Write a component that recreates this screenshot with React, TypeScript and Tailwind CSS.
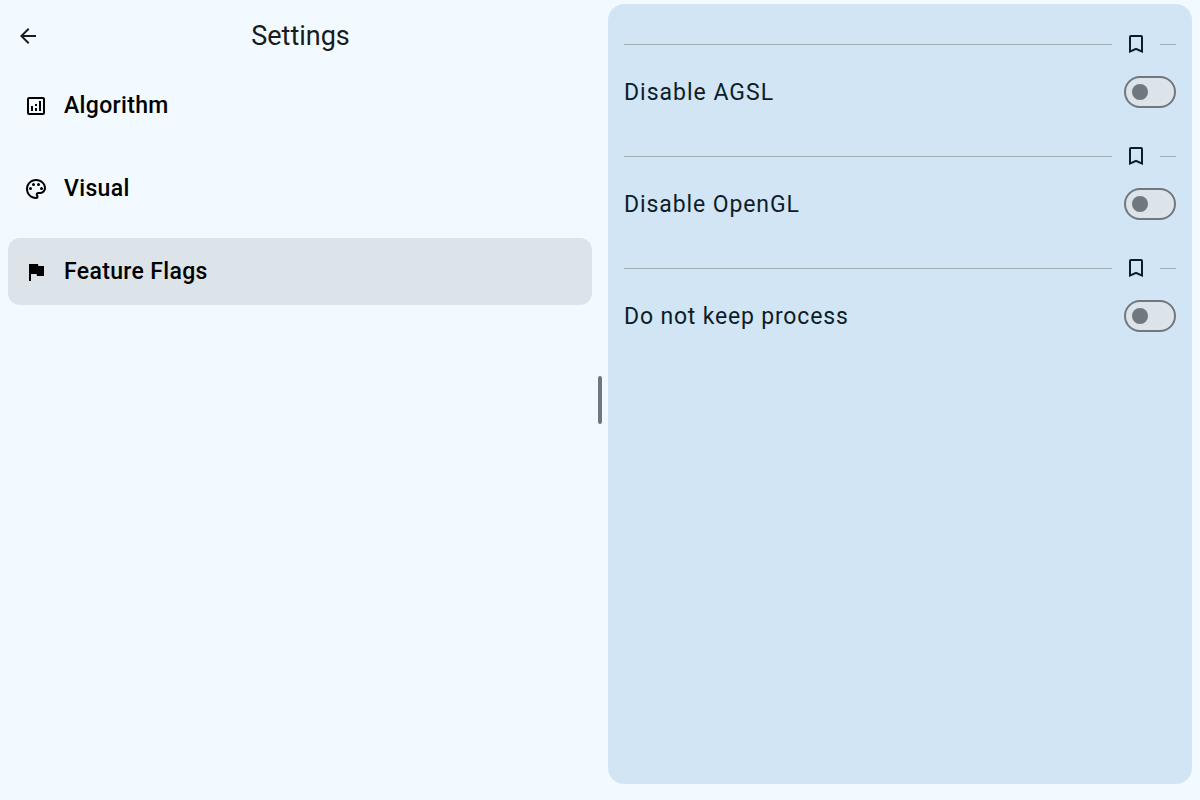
const paths = {
  back: "M20 11H7.83l5.59-5.59L12 4l-8 8 8 8 1.41-1.41L7.83 13H20v-2z",
  chart: "M19 3H5c-1.1 0-2 .9-2 2v14c0 1.1.9 2 2 2h14c1.1 0 2-.9 2-2V5c0-1.1-.9-2-2-2zm0 16H5V5h14v14zM7 12h2v5H7zm8-5h2v10h-2zm-4 7h2v3h-2zm0-4h2v2h-2z",
  palette: "M12 22C6.49 22 2 17.51 2 12S6.49 2 12 2s10 4.04 10 9c0 3.31-2.69 6-6 6h-1.77c-.28 0-.5.22-.5.5 0 .12.05.23.13.33.41.47.64 1.06.64 1.67A2.5 2.5 0 0 1 12 22zm0-18c-4.41 0-8 3.59-8 8s3.59 8 8 8c.28 0 .5-.22.5-.5a.54.54 0 0 0-.14-.35c-.41-.46-.63-1.05-.63-1.65a2.5 2.5 0 0 1 2.5-2.5H16c2.21 0 4-1.79 4-4 0-3.86-3.59-7-8-7z M5 11.5a1.5 1.5 0 1 0 3 0a1.5 1.5 0 1 0-3 0zM8 7.5a1.5 1.5 0 1 0 3 0a1.5 1.5 0 1 0-3 0zM13 7.5a1.5 1.5 0 1 0 3 0a1.5 1.5 0 1 0-3 0zM16 11.5a1.5 1.5 0 1 0 3 0a1.5 1.5 0 1 0-3 0z",
  flag: "M14.4 6L14 4H5v17h2v-7h5.6l.4 2h7V6z",
  bookmark: "M17 3H7c-1.1 0-1.99.9-1.99 2L5 21l7-3 7 3V5c0-1.1-.9-2-2-2zm0 15l-5-2.18L7 18V5h10v13z",
};

function Icon({ name }: { name: keyof typeof paths }) {
  return (
    <svg className="size-6 shrink-0" viewBox="0 0 24 24" fill="currentColor" aria-hidden="true">
      <path d={paths[name]} />
    </svg>
  );
}

function NavItem({ icon, label, selected = false }: { icon: keyof typeof paths; label: string; selected?: boolean }) {
  return (
    <button className={`flex h-[67px] w-full items-center gap-4 rounded-xl px-4 text-left text-black ${selected ? "bg-[#dce3e9]" : ""}`}>
      <Icon name={icon} />
      <span className="text-[23px] leading-8 font-medium tracking-[0.34px]">{label}</span>
    </button>
  );
}

function FlagSetting({ label, tracking }: { label: string; tracking: string }) {
  return (
    <section className="h-28">
      <div className="flex h-12 items-center">
        <div className="h-px flex-1 bg-[#9eadb6]" />
        <div className="flex w-12 justify-center"><Icon name="bookmark" /></div>
        <div className="h-px w-4 bg-[#9eadb6]" />
      </div>
      <div className="flex h-12 items-center justify-between">
        <span className={`pt-0.5 text-[23px] leading-8 ${tracking}`}>{label}</span>
        <button role="switch" aria-checked="false" aria-label={label} className="flex h-8 w-[52px] items-center rounded-full border-2 border-[#70777e] bg-[#dce3e9] pl-1.5">
          <span className="size-4 rounded-full bg-[#70777e]" />
        </button>
      </div>
    </section>
  );
}

export default function App() {
  return (
    <div className="flex h-screen w-full overflow-hidden bg-[#f3faff] font-[Roboto,sans-serif]">
      <main className="w-[592px] pl-2 text-[#161c20]">
        <header className="flex h-[72px] items-center">
          <button className="ml-2" aria-label="Back"><Icon name="back" /></button>
          <h1 className="mr-[31px] flex-1 text-center text-[27px] leading-9">Settings</h1>
        </header>
        <nav className="flex w-[584px] flex-col gap-4">
          <NavItem icon="chart" label="Algorithm" />
          <NavItem icon="palette" label="Visual" />
          <NavItem icon="flag" label="Feature Flags" selected />
        </nav>
      </main>
      <div className="flex w-4 items-center justify-center"><div className="h-12 w-1 rounded-full bg-[#70777e]" /></div>
      <aside className="mt-1 h-[780px] w-[584px] rounded-2xl bg-[#d2e5f4] px-4 pt-4 text-[#0b1d29]">
        <FlagSetting label="Disable AGSL" tracking="tracking-[1px]" />
        <FlagSetting label="Disable OpenGL" tracking="tracking-[0.9px]" />
        <FlagSetting label="Do not keep process" tracking="tracking-[0.82px]" />
      </aside>
    </div>
  );
}
